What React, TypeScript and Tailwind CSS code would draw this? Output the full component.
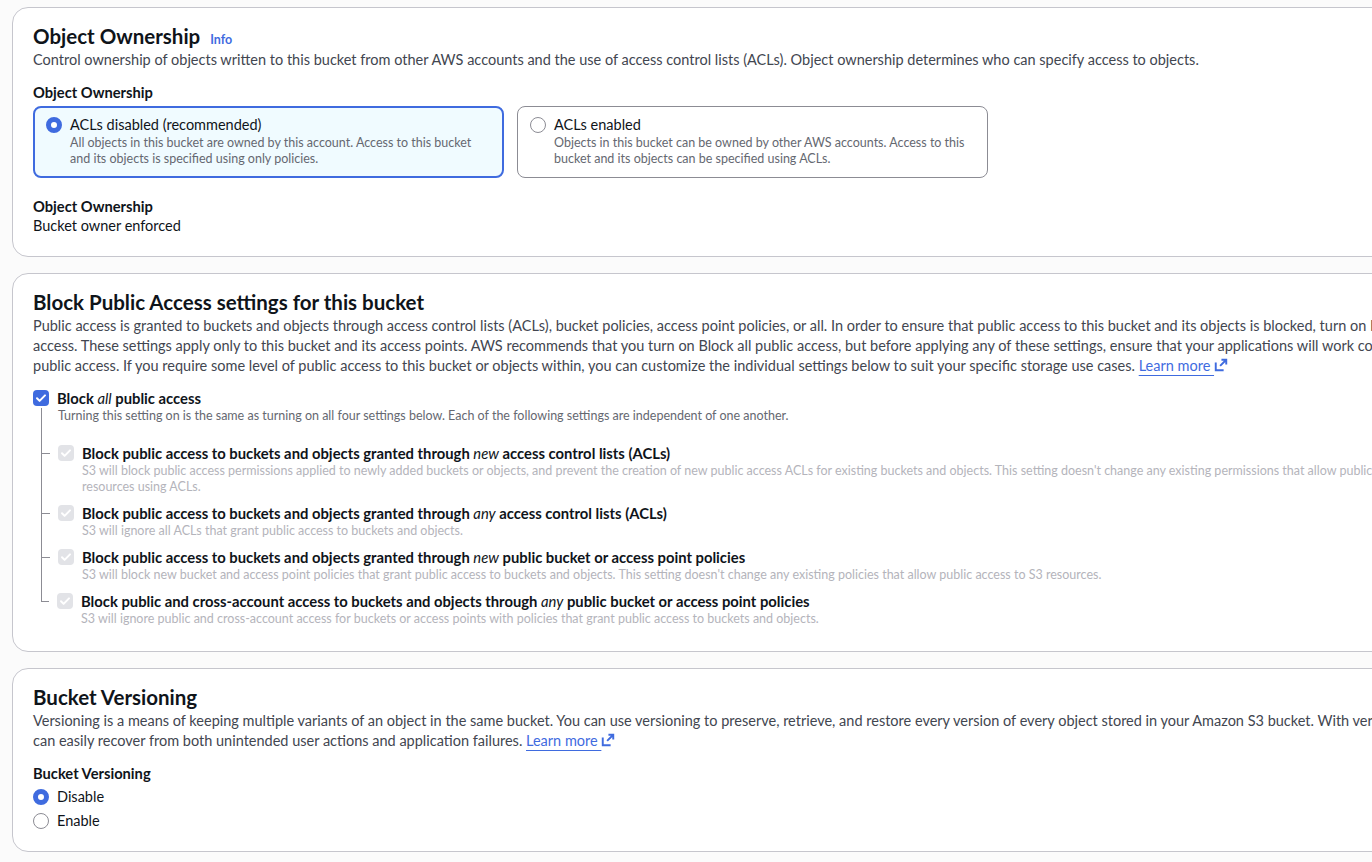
import { ReactNode } from "react";

const BLUE = "#3f6bdf";

function Check({ disabled }: { disabled?: boolean }) {
  return (
    <span
      className={
        disabled
          ? "flex h-4 w-4 shrink-0 items-center justify-center rounded-[4px] bg-[#e2e3e7]"
          : "flex h-4 w-4 shrink-0 items-center justify-center rounded-[4px] bg-[#3f6bdf]"
      }
    >
      <svg width="16" height="16" viewBox="0 0 16 16" fill="none">
        <path d="M4 8.3l2.6 2.6L12 5.4" stroke="white" strokeWidth="2" strokeLinecap="round" strokeLinejoin="round" />
      </svg>
    </span>
  );
}

function Radio({ on }: { on?: boolean }) {
  return on ? (
    <span className="block h-4 w-4 shrink-0 rounded-full border-[5px] border-[#3f6bdf] bg-white" />
  ) : (
    <span className="block h-4 w-4 shrink-0 rounded-full border border-[#8c8c94] bg-white" />
  );
}

function External() {
  return (
    <svg width="14" height="14" viewBox="0 0 16 16" fill="none" className="inline-block align-[-1px]">
      <path d="M2 5v9h9" stroke={BLUE} strokeWidth="2.2" />
      <path d="M8.5 2H14v5.5M14 2L7 9" stroke={BLUE} strokeWidth="2.2" />
    </svg>
  );
}

function LearnMore() {
  return (
    <span className="text-[#3f6bdf]">
      <span className="underline decoration-1 underline-offset-[4px]">Learn more </span>
      <External />
    </span>
  );
}

function Card({ title, info, children }: { title: string; info?: boolean; children: ReactNode }) {
  return (
    <section className="w-[1500px] rounded-2xl border border-[#c6c6cd] bg-white px-5 pt-4 pb-5">
      <h2 className="h-6 text-[20.5px] leading-6 font-bold whitespace-nowrap text-[#0f141a]">
        {title}
        {info && <span className="ml-[10px] text-[12.5px] leading-none font-bold text-[#3f6bdf]">Info</span>}
      </h2>
      {children}
    </section>
  );
}

function Lines({ lines, className }: { lines: ReactNode[]; className: string }) {
  return (
    <div className={className}>
      {lines.map((l, i) => (
        <div key={i} className="whitespace-nowrap">
          {l}
        </div>
      ))}
    </div>
  );
}

const subItems = [
  {
    title: (
      <>
        Block public access to buckets and objects granted through <i className="font-normal">new</i> access control lists (ACLs)
      </>
    ),
    desc: [
      "S3 will block public access permissions applied to newly added buckets or objects, and prevent the creation of new public access ACLs for existing buckets and objects. This setting doesn't change any existing permissions that allow public access to S3",
      "resources using ACLs.",
    ],
  },
  {
    title: (
      <>
        Block public access to buckets and objects granted through <i className="font-normal">any</i> access control lists (ACLs)
      </>
    ),
    desc: ["S3 will ignore all ACLs that grant public access to buckets and objects."],
  },
  {
    title: (
      <>
        Block public access to buckets and objects granted through <i className="font-normal">new</i> public bucket or access point policies
      </>
    ),
    desc: [
      "S3 will block new bucket and access point policies that grant public access to buckets and objects. This setting doesn't change any existing policies that allow public access to S3 resources.",
    ],
  },
  {
    title: (
      <>
        Block public and cross-account access to buckets and objects through <i className="font-normal">any</i> public bucket or access point policies
      </>
    ),
    desc: [
      "S3 will ignore public and cross-account access for buckets or access points with policies that grant public access to buckets and objects.",
    ],
  },
];

function SubItem({ item, last }: { item: (typeof subItems)[number]; last?: boolean }) {
  return (
    <div className="flex">
      {last ? (
        <div className="mr-2 h-[19px] w-2 shrink-0 border-b border-l border-[#8c8c94]" />
      ) : (
        <div className="mr-2 mt-[18px] h-px w-2 shrink-0 bg-[#8c8c94]" />
      )}
      <div className="flex gap-2 pt-2">
        <div className="flex h-5 items-center">
          <Check disabled />
        </div>
        <div>
          <div className="text-[14.8px] leading-5 font-bold whitespace-nowrap text-[#0f141a]">{item.title}</div>
          <Lines lines={item.desc} className="text-[12.5px] leading-4 text-[#b4b4bb]" />
        </div>
      </div>
    </div>
  );
}

export default function App() {
  return (
    <div className="h-[862px] w-[1372px] overflow-hidden bg-[#fbfbfb] pt-[7px] pl-3 font-['Lato',sans-serif] text-[14.5px] leading-5 text-[#0f141a]">
      <div className="flex flex-col gap-4">
        <Card title="Object Ownership" info>
          <p className="mt-[2px] whitespace-nowrap text-[#424650]">
            Control ownership of objects written to this bucket from other AWS accounts and the use of access control lists (ACLs). Object ownership determines who can specify access to objects.
          </p>
          <div className="mt-3 text-[14.7px] font-bold">Object Ownership</div>
          <div className="mt-1 flex gap-[13px]">
            <div className="flex w-[471px] gap-2 rounded-lg border-2 border-[#3f6bdf] bg-[#f0fbff] pt-[7px] pr-3 pb-[9px] pl-[11px]">
              <div className="flex h-5 items-center">
                <Radio on />
              </div>
              <div>
                <div>ACLs disabled (recommended)</div>
                <Lines
                  className="text-[12.5px] leading-4 text-[#656871]"
                  lines={["All objects in this bucket are owned by this account. Access to this bucket", "and its objects is specified using only policies."]}
                />
              </div>
            </div>
            <div className="flex w-[471px] gap-2 rounded-lg border border-[#8c8c94] bg-white pt-[8px] pr-3 pb-[10px] pl-3">
              <div className="flex h-5 items-center">
                <Radio />
              </div>
              <div>
                <div>ACLs enabled</div>
                <Lines
                  className="text-[12.5px] leading-4 text-[#656871]"
                  lines={["Objects in this bucket can be owned by other AWS accounts. Access to this", "bucket and its objects can be specified using ACLs."]}
                />
              </div>
            </div>
          </div>
          <div className="mt-[18px] text-[14.7px] font-bold">Object Ownership</div>
          <div>Bucket owner enforced</div>
        </Card>

        <Card title="Block Public Access settings for this bucket">
          <Lines
            className="mt-[2px] text-[#424650]"
            lines={[
              "Public access is granted to buckets and objects through access control lists (ACLs), bucket policies, access point policies, or all. In order to ensure that public access to this bucket and its objects is blocked, turn on Block all public",
              "access. These settings apply only to this bucket and its access points. AWS recommends that you turn on Block all public access, but before applying any of these settings, ensure that your applications will work correctly without",
              <>
                public access. If you require some level of public access to this bucket or objects within, you can customize the individual settings below to suit your specific storage use cases. <LearnMore />
              </>,
            ]}
          />
          <div className="mt-3 flex gap-2">
            <div className="flex h-5 items-center">
              <Check />
            </div>
            <div className="text-[14.8px] font-bold">
              Block <i className="font-normal">all</i> public access
            </div>
          </div>
          <div className="ml-2 pb-1">
            <div className="border-l border-[#8c8c94] pl-4">
              <div className="text-[12.5px] leading-4 whitespace-nowrap text-[#656871]">
                Turning this setting on is the same as turning on all four settings below. Each of the following settings are independent of one another.
              </div>
              <div className="-ml-4 flex flex-col pt-[11px]">
                {subItems.slice(0, 3).map((it, i) => (
                  <SubItem key={i} item={it} />
                ))}
              </div>
            </div>
            <SubItem item={subItems[3]} last />
          </div>
        </Card>

        <Card title="Bucket Versioning">
          <Lines
            className="mt-[2px] text-[#424650]"
            lines={[
              "Versioning is a means of keeping multiple variants of an object in the same bucket. You can use versioning to preserve, retrieve, and restore every version of every object stored in your Amazon S3 bucket. With versioning, you",
              <>
                can easily recover from both unintended user actions and application failures. <LearnMore />
              </>,
            ]}
          />
          <div className="mt-3 text-[14.7px] font-bold">Bucket Versioning</div>
          <div className="mt-1 flex flex-col gap-1">
            <label className="flex items-center gap-2">
              <Radio on />
              Disable
            </label>
            <label className="flex items-center gap-2">
              <Radio />
              Enable
            </label>
          </div>
        </Card>
      </div>
    </div>
  );
}
